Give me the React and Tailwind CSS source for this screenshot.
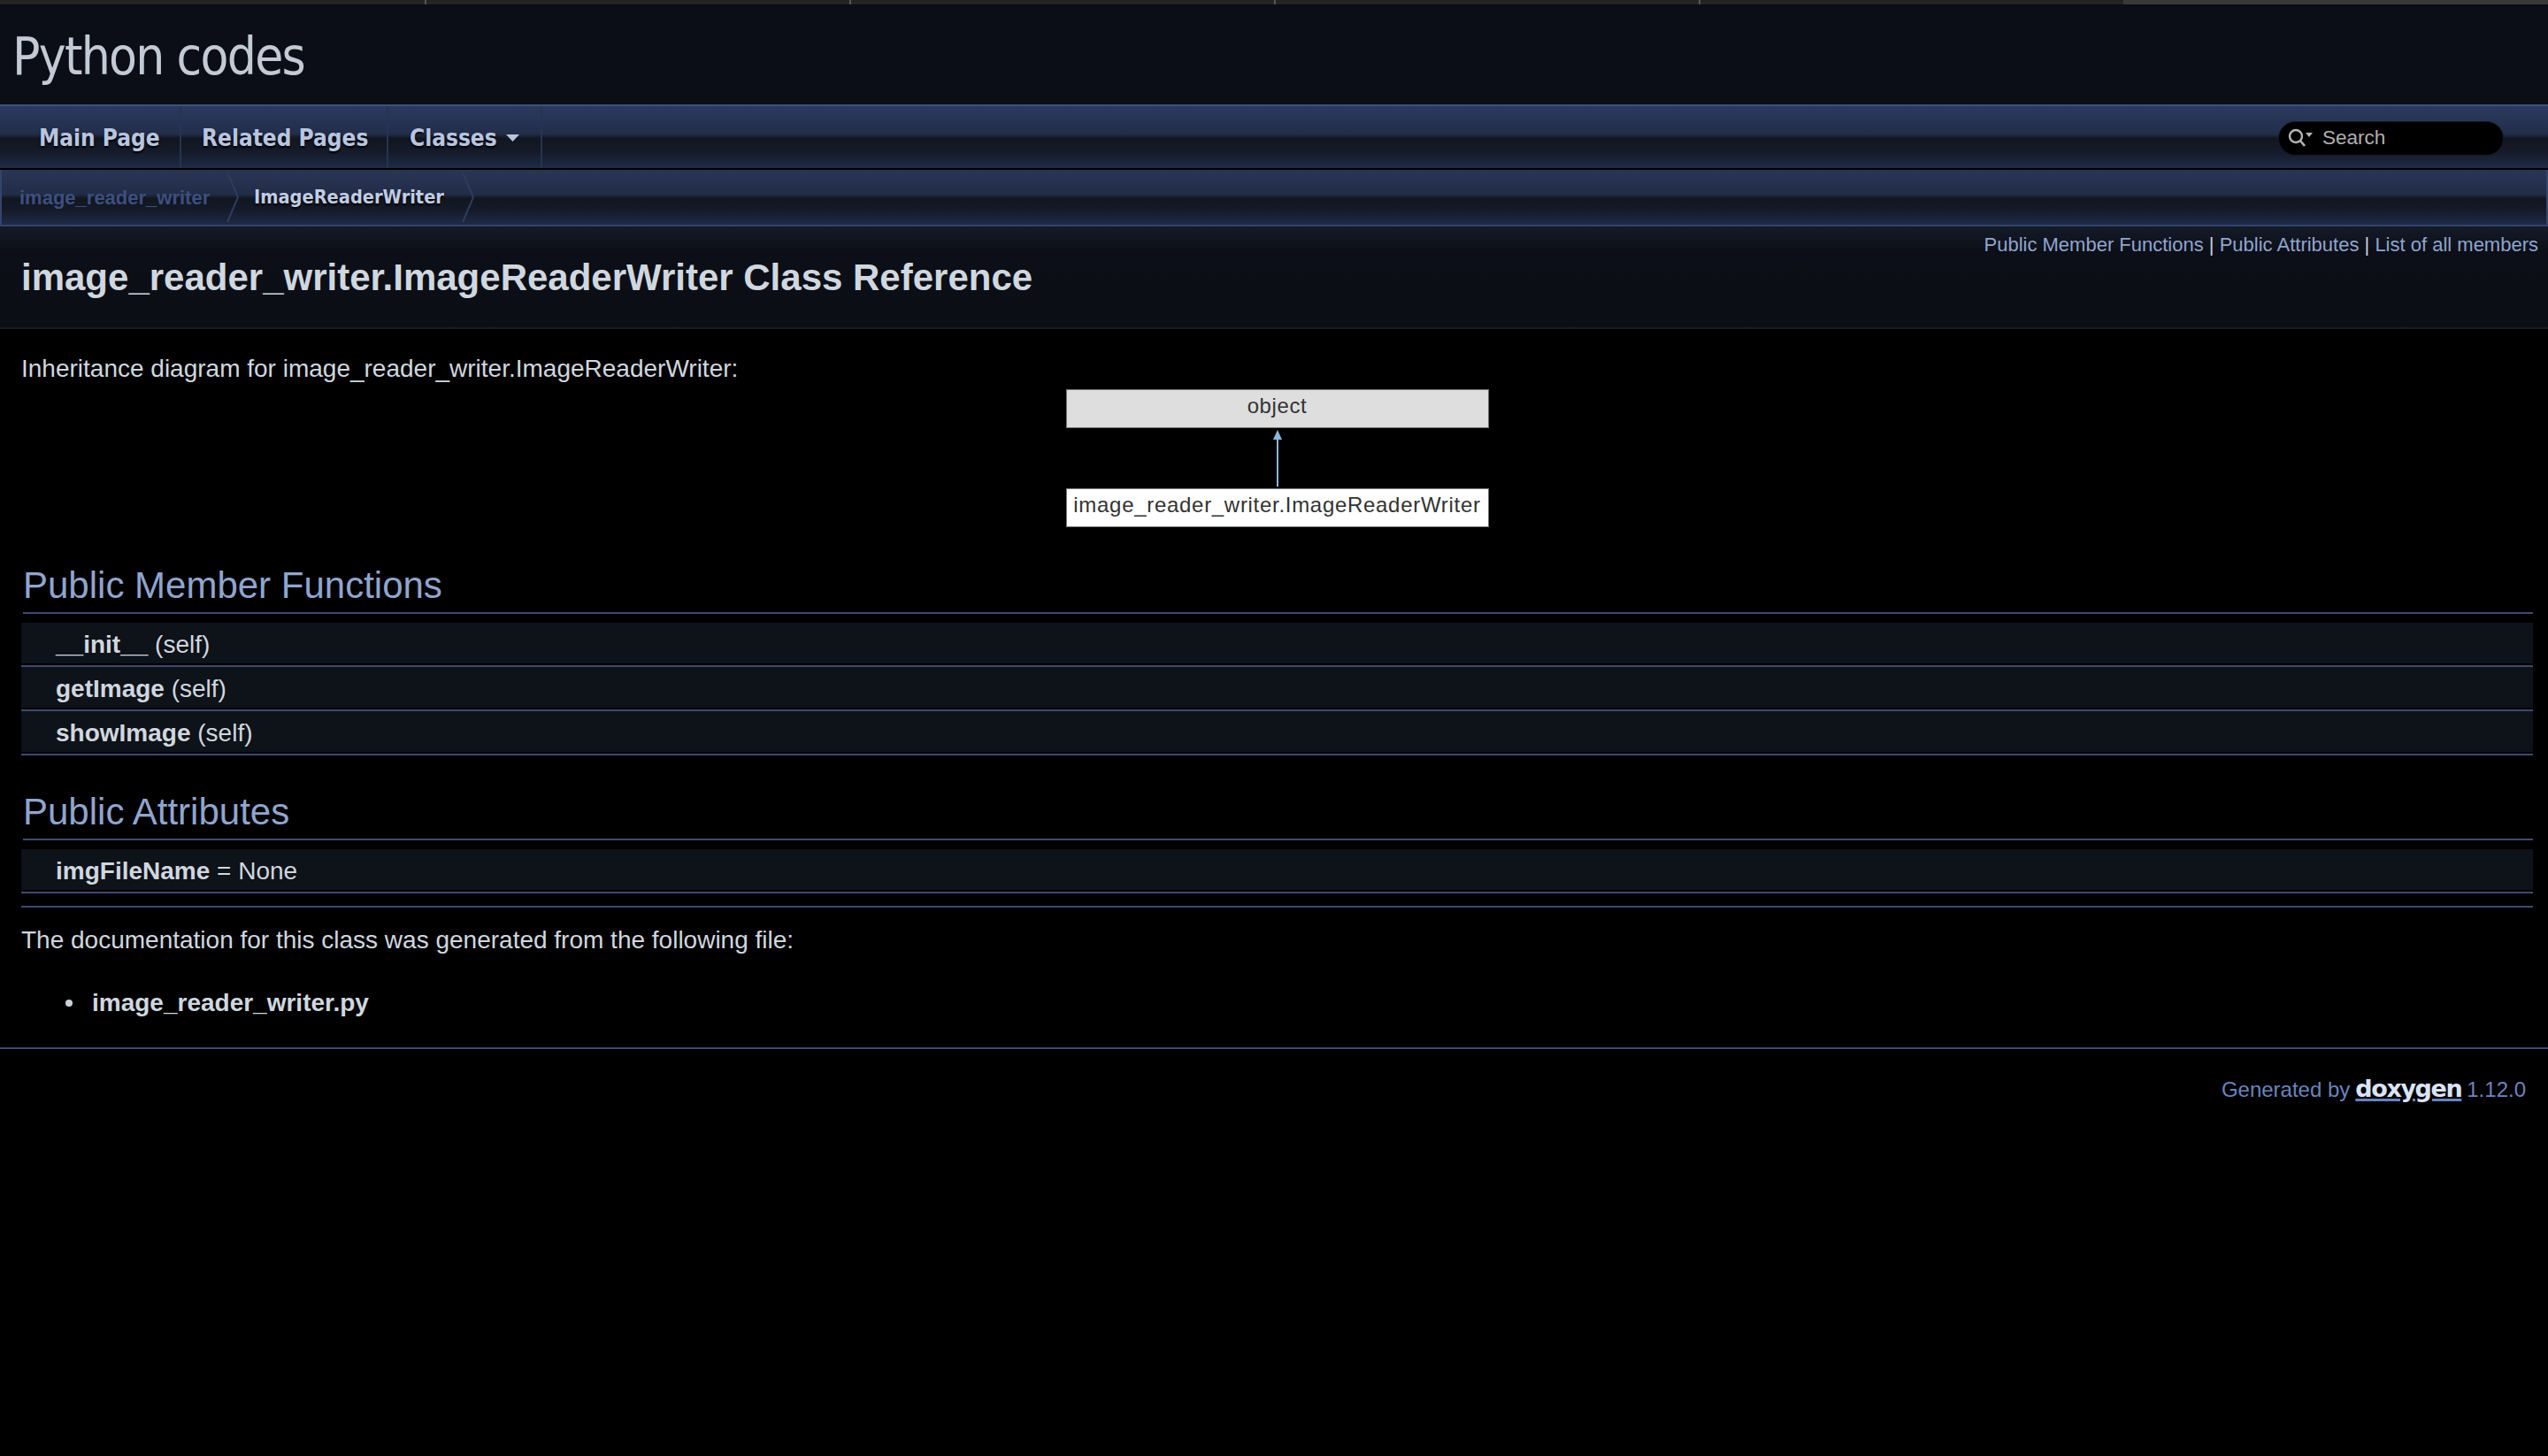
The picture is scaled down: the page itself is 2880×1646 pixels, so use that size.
import React from "react";

const sans = "font-['Liberation_Sans',Arial,sans-serif]";
const uiFont = "font-['DejaVu_Sans_Condensed','Noto_Sans',sans-serif]";

// browser tab strip that peeks in at the very top
function TopStrip() {
  return (
    <div className="grid grid-cols-6 h-[6px] border-b border-[#0a0a0a]">
      <div className="bg-[#242424]" />
      <div className="bg-[#242424] border-l-2 border-[#555555]" />
      <div className="bg-[#242424] border-l-2 border-[#555555]" />
      <div className="bg-[#242424] border-l-2 border-[#555555]" />
      <div className="bg-[#242424] border-l-2 border-[#555555]" />
      <div className="bg-[#393939]" />
    </div>
  );
}

function NavItem({ children, width, pl }) {
  return (
    <div
      className={`flex items-center h-full pt-[2px] border-r-2 border-[#27344f] ${width} ${pl} ${uiFont} font-bold text-[26px] text-[#b8c5e0] [text-shadow:0_2px_2px_#000]`}
    >
      {children}
    </div>
  );
}

function SearchBox() {
  return (
    <div className="ml-auto mr-[50px] mt-[2px] flex items-center w-[255px] h-[39px] rounded-full bg-black border border-[#111a2c] pl-[8px]">
      <svg width="32" height="28" viewBox="0 0 32 28" className="shrink-0">
        <circle cx="11" cy="12" r="7" fill="none" stroke="#b4b4b4" strokeWidth="2.4" />
        <line x1="16" y1="17" x2="21" y2="23" stroke="#b4b4b4" strokeWidth="2.6" />
        <polygon points="22,8 30,8 26,13" fill="#b4b4b4" />
      </svg>
      <span className={`ml-[9px] ${sans} text-[22.5px] text-[#b0b0b0]`}>Search</span>
    </div>
  );
}

function Chevron() {
  return (
    <svg width="16" height="60" viewBox="0 0 16 60" className="shrink-0">
      <path d="M1 2 L13 30 L1 58" fill="none" stroke="#2e3c60" strokeWidth="2" />
    </svg>
  );
}

function SectionHeading({ children, mt }) {
  return (
    <div className={`${mt} ml-[2px] h-[52px] border-b-2 border-[#3d4a72]`}>
      <h2 className="text-[42px] leading-[40px] text-[#90a5ce]">{children}</h2>
    </div>
  );
}

function MemberRow({ name, rest }) {
  return (
    <div className="h-[50px] border-b-2 border-[#3d4a72]">
      <div className="h-[46px] pt-[3px] flex items-center bg-[#0e1219] pl-[39px] text-[28px] text-[#d0d7df]">
        <b className="font-bold">{name}</b>
        <span className="whitespace-pre">{rest}</span>
      </div>
    </div>
  );
}

export default function App() {
  return (
    <div className={`min-h-[1646px] bg-black ${sans} text-[#d0d7df]`}>
      <TopStrip />

      {/* Title */}
      <div className="h-[112px] pt-[3px] bg-[#0b0e17] pl-[14px] flex items-center">
        <h1 className={`${uiFont} text-[58px] text-[#c4cad5] leading-none tracking-[-1.7px]`}>
          Python codes
        </h1>
      </div>

      {/* Nav bar */}
      <div className="h-[72px] border-t-2 border-[#3d5080] flex items-center bg-[linear-gradient(#2b3a5e_0%,#222d49_45%,#12161f_52%,#151b2b_75%,#1f2b47_100%)]">
        <NavItem width="w-[205px]" pl="pl-[44px]">Main Page</NavItem>
        <NavItem width="w-[234px]" pl="pl-[23px]">Related Pages</NavItem>
        <NavItem width="w-[174px]" pl="pl-[24px]">
          Classes
          <svg width="16" height="10" viewBox="0 0 16 10" className="ml-[10px]">
            <polygon points="0,1 15,1 7.5,9" fill="#b8c5e0" />
          </svg>
        </NavItem>
        <SearchBox />
      </div>
      <div className="h-[2px] bg-black" />

      {/* Breadcrumb */}
      <div className="h-[64px] border-b-2 border-l-2 border-r-2 border-[#34446c] flex items-center bg-[linear-gradient(#2a3656_0%,#222c47_45%,#12161f_52%,#151b2b_75%,#1f2b47_100%)]">
        <span className="pl-[20px] w-[254px] font-bold text-[22px] text-[#3d4f80]">image_reader_writer</span>
        <Chevron />
        <span className={`pl-[15px] w-[250px] ${uiFont} font-bold text-[21.6px] text-[#c0cce4] [text-shadow:0_2px_2px_#000]`}>
          ImageReaderWriter
        </span>
        <Chevron />
      </div>

      {/* Page header */}
      <div className="h-[116px] border-b-2 border-[#161b28] bg-[linear-gradient(#151a28_0%,#0c0f17_25%,#0b0e15_100%)]">
        <div className="pt-[5px] pr-[11px] text-right text-[22px] leading-[32px] text-[#c9d1d9]">
          <span className="text-[#90a5ce]">Public Member Functions</span> | <span className="text-[#90a5ce]">Public Attributes</span> | <span className="text-[#90a5ce]">List of all members</span>
        </div>
        <h1 className="pl-[24px] mt-[-3px] font-bold text-[42px] leading-[48px] text-[#d0d7df]">
          image_reader_writer.ImageReaderWriter Class Reference
        </h1>
      </div>

      {/* Contents */}
      <div className="pl-[24px] pr-[17px]">
        <p className="pt-[27px] text-[28px] leading-[36px]">
          Inheritance diagram for image_reader_writer.ImageReaderWriter:
        </p>

        {/* Diagram */}
        <div className="mt-[5px] flex flex-col items-center text-[#333333] text-[24px]">
          <div className="w-[478px] h-[44px] pb-[6px] bg-[#dedede] border border-[#777777] flex items-center justify-center tracking-[0.6px]">
            object
          </div>
          <svg width="12" height="68" viewBox="0 0 12 68" className="block">
            <polygon points="6,2 1,13 11,13" fill="#8ab8da" />
            <line x1="6" y1="10" x2="6" y2="66" stroke="#8ab8da" strokeWidth="2" />
          </svg>
          <div className="w-[478px] h-[44px] pb-[6px] bg-white border border-[#777777] flex items-center justify-center tracking-[0.7px] whitespace-nowrap">
            image_reader_writer.ImageReaderWriter
          </div>
        </div>

        <SectionHeading mt="mt-[46px]">Public Member Functions</SectionHeading>
        <div className="mt-[10px]">
          <MemberRow name="__init__" rest=" (self)" />
          <MemberRow name="getImage" rest=" (self)" />
          <MemberRow name="showImage" rest=" (self)" />
        </div>
        <SectionHeading mt="mt-[44px]">Public Attributes</SectionHeading>
        <div className="mt-[10px]">
          <MemberRow name="imgFileName" rest=" = None" />
        </div>
        <div className="mt-[14px] h-[2px] bg-[#3d4a72]" />

        <p className="mt-[19px] text-[28px] leading-[36px]">
          The documentation for this class was generated from the following file:
        </p>
        <ul className="mt-[35px] pl-[50px] text-[28px] leading-[36px]">
          <li className="flex items-center gap-[22px] font-bold">
            <span className="w-[8px] h-[8px] rounded-full bg-[#c9d1d9]" />
            image_reader_writer.py
          </li>
        </ul>
      </div>

      {/* Footer */}
      <div className="mt-[32px] border-t-2 border-[#3d4a72] pt-[28px] pr-[25px] flex justify-end items-baseline gap-[6px] text-[24px] text-[#6a84bd] whitespace-nowrap">
        <span>Generated by</span>
        <span className="font-['DejaVu_Sans',sans-serif] font-bold text-[27px] leading-[32px] text-[#dbe4f5] underline decoration-[#6a84bd] decoration-[3px] tracking-[-1.4px]">
          doxygen
        </span>
        <span>1.12.0</span>
      </div>
    </div>
  );
}
